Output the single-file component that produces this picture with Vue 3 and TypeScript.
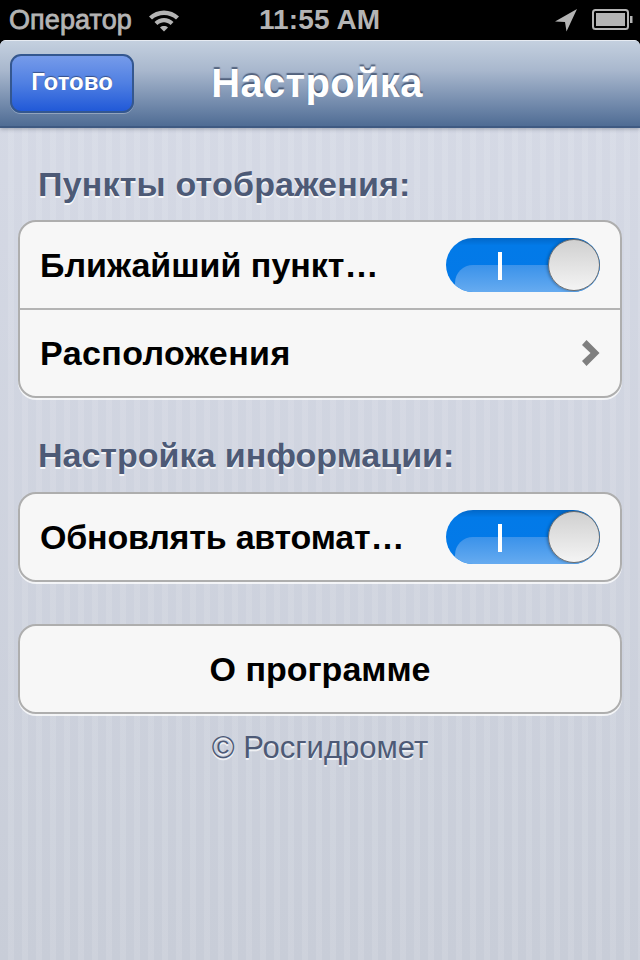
<template>
  <div class="screen">
    <div class="status-bar">
      <span class="carrier">Оператор</span>
      <svg class="wifi" width="32" height="24" viewBox="0 0 32 24">
        <path d="M1 8.5C9 0.5 23 0.5 31 8.5L28 11.5C21.5 5.5 10.5 5.5 4 11.5Z" fill="#b4b4b4" />
        <path d="M6.5 14C12 8.8 20 8.8 25.5 14L22.6 17C18.6 13.4 13.4 13.4 9.4 17Z" fill="#b4b4b4" />
        <path d="M12 19.5C14.3 17.6 17.7 17.6 20 19.5L16 23.5Z" fill="#b4b4b4" />
      </svg>
      <span class="time">11:55 AM</span>
      <svg class="arrow" width="24" height="24" viewBox="0 0 24 24">
        <path d="M23 1L1 13.5L11 14L12.5 23.5Z" fill="#b4b4b4" />
      </svg>
      <svg class="battery" width="42" height="22" viewBox="0 0 42 22">
        <rect x="1" y="1" width="35" height="19" rx="2.5" fill="none" stroke="#b4b4b4" stroke-width="2" />
        <rect x="4" y="4" width="29" height="13" fill="#b4b4b4" />
        <path d="M38 7H40.5V14H38Z" fill="#b4b4b4" />
      </svg>
    </div>

    <div class="content">
      <header class="nav-bar">
        <button class="done-btn">Готово</button>
        <h1 class="nav-title">Настройка</h1>
      </header>

      <main class="settings">
        <h2 class="section-title">Пункты отображения:</h2>
        <div class="group">
          <div class="row">
            <span class="row-label">Ближайший пункт…</span>
            <div class="switch">
              <span class="switch-gloss"></span>
              <span class="switch-mark"></span>
              <span class="switch-knob"></span>
            </div>
          </div>
          <div class="row">
            <span class="row-label wide">Расположения</span>
            <svg class="chevron" width="18" height="26" viewBox="0 0 18 26">
              <path d="M0 5L4.5 0L17.5 13L4.5 26L0 21L8.5 13Z" fill="#7f7f7f" />
            </svg>
          </div>
        </div>

        <h2 class="section-title second">Настройка информации:</h2>
        <div class="group">
          <div class="row">
            <span class="row-label narrow">Обновлять автомат…</span>
            <div class="switch">
              <span class="switch-gloss"></span>
              <span class="switch-mark"></span>
              <span class="switch-knob"></span>
            </div>
          </div>
        </div>

        <div class="group about">
          <div class="row center">
            <span class="row-label">О программе</span>
          </div>
        </div>
        <div class="copyright">© Росгидромет</div>
      </main>
    </div>
  </div>
</template>

<script setup lang="ts">
</script>

<style>
html,
body {
  margin: 0;
  background: #000;
}
</style>

<style scoped>
.screen {
  width: 640px;
  height: 960px;
  display: flex;
  flex-direction: column;
  background: #000;
  font-family: "Liberation Sans", Arial, sans-serif;
  overflow: hidden;
}

.status-bar {
  height: 40px;
  flex: none;
  display: flex;
  align-items: center;
  padding: 0 6px 0 9px;
  box-sizing: border-box;
  color: #b4b4b4;
  font-weight: 700;
}

.carrier {
  font-weight: 400;
  font-size: 27px;
  letter-spacing: 0.1px;
  -webkit-text-stroke: 0.8px #b4b4b4;
}

.wifi {
  margin-left: 16px;
}

.time {
  margin-left: 79px;
  font-size: 28px;
  letter-spacing: 0.1px;
}

.arrow {
  margin-left: auto;
}

.battery {
  margin-left: 14px;
}

.content {
  flex: 1;
  border-radius: 6px 6px 0 0;
  overflow: hidden;
  background:
    repeating-linear-gradient(90deg, rgba(255, 255, 255, 0) 0 8px, rgba(255, 255, 255, 0.1) 8px 14px),
    linear-gradient(180deg, #d6dae6 0%, #c8cdd8 100%);
}

.nav-bar {
  position: relative;
  height: 88px;
  box-sizing: border-box;
  display: flex;
  align-items: center;
  justify-content: center;
  padding-right: 6px;
  border-top: 1px solid #e6ebf2;
  border-bottom: 2px solid #3f5a82;
  background: linear-gradient(180deg, #c4d0df 0%, #a8b7cd 35%, #7189ab 75%, #4f6c94 100%);
  box-shadow: 0 1px 4px rgba(40, 50, 70, 0.35);
}

.done-btn {
  position: absolute;
  left: 10px;
  top: 13px;
  width: 124px;
  height: 59px;
  box-sizing: border-box;
  border: 2px solid #34578f;
  border-radius: 11px;
  background: linear-gradient(180deg, #769bea 0%, #4f7fe2 50%, #2159d8 100%);
  color: #fff;
  font-family: inherit;
  font-size: 24px;
  font-weight: 700;
  text-shadow: 0 -1px 1px rgba(0, 0, 0, 0.4);
  box-shadow: 0 1px 0 rgba(255, 255, 255, 0.3);
  padding: 0 0 3px;
}

.nav-title {
  margin: 0;
  color: #fff;
  font-size: 40px;
  letter-spacing: 0.3px;
  font-weight: 700;
  text-shadow: 0 -2px 1px rgba(40, 55, 85, 0.65);
}

.settings {
  padding: 0 18px;
  display: flex;
  flex-direction: column;
}

.section-title {
  margin: 36px 0 16px 20px;
  font-size: 34px;
  letter-spacing: 0.2px;
  line-height: 40px;
  height: 40px;
  font-weight: 700;
  color: #4d5a76;
  text-shadow: 0 2px 0 rgba(255, 255, 255, 0.85);
}

.section-title.second {
  margin-top: 37px;
  margin-bottom: 17px;
  letter-spacing: 0;
}

.group {
  background: #f7f7f7;
  border: 2px solid #aeaeae;
  border-radius: 18px;
  box-shadow: 0 2px 0 rgba(255, 255, 255, 0.75);
}

.group.about {
  margin-top: 42px;
}

.row {
  height: 86px;
  box-sizing: border-box;
  display: flex;
  align-items: center;
  justify-content: space-between;
  padding: 0 20px;
}

.row + .row {
  height: 88px;
  border-top: 2px solid #b4b4b4;
}

.row.center {
  justify-content: center;
}

.row-label {
  font-size: 34px;
  font-weight: 700;
  color: #000;
  white-space: nowrap;
}

.row-label.narrow {
  letter-spacing: -0.2px;
}

.row-label.wide {
  letter-spacing: 0.4px;
}

.switch {
  position: relative;
  width: 154px;
  height: 54px;
  border-radius: 27px;
  overflow: hidden;
  background: linear-gradient(180deg, #0267c8 0%, #027ae8 14%, #0479e8 100%);
}

.switch-gloss {
  position: absolute;
  left: 9px;
  right: 0;
  top: 27px;
  bottom: 0;
  border-radius: 18px 0 0 0;
  background: linear-gradient(180deg, #3a92ea 0%, #66abf0 100%);
}

.switch-mark {
  position: absolute;
  left: 52px;
  top: 14px;
  width: 4px;
  height: 28px;
  background: #fff;
}

.switch-knob {
  position: absolute;
  right: 0;
  top: 1px;
  width: 52px;
  height: 52px;
  box-sizing: border-box;
  border: 1.5px solid #6e6e6e;
  border-radius: 50%;
  background: linear-gradient(180deg, #d0d0d0 0%, #f4f4f4 100%);
  box-shadow: -1px 0 3px rgba(0, 0, 0, 0.3);
}

.chevron {
  display: block;
}

.copyright {
  margin-top: 16px;
  text-align: center;
  font-size: 31px;
  color: #4d5a76;
  text-shadow: 0 2px 0 rgba(255, 255, 255, 0.7);
}
</style>
